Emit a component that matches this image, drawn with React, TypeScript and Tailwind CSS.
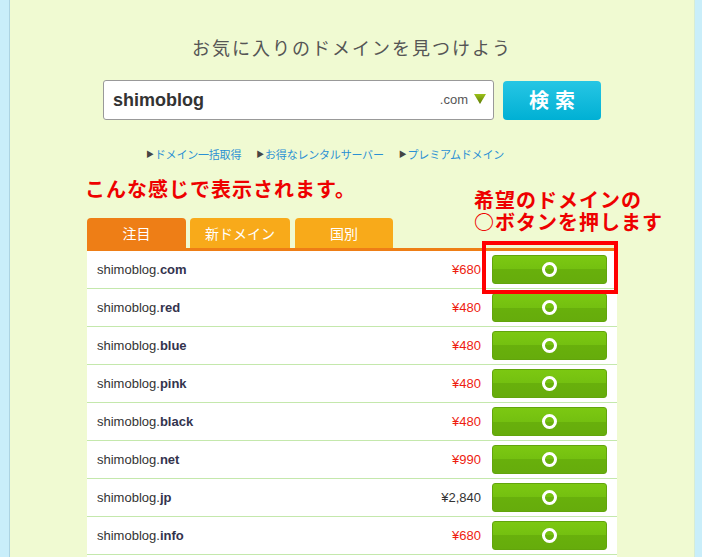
import React from 'react';

const JP = { fontFamily: '"Noto Sans CJK JP", "Liberation Sans", sans-serif' };
const SANS = { fontFamily: '"Liberation Sans", "Noto Sans CJK JP", sans-serif' };

type Row = { tld: string; price: string; sale: boolean };

const rows: Row[] = [
  { tld: 'com', price: '¥680', sale: true },
  { tld: 'red', price: '¥480', sale: true },
  { tld: 'blue', price: '¥480', sale: true },
  { tld: 'pink', price: '¥480', sale: true },
  { tld: 'black', price: '¥480', sale: true },
  { tld: 'net', price: '¥990', sale: true },
  { tld: 'jp', price: '¥2,840', sale: false },
  { tld: 'info', price: '¥680', sale: true },
];

function CircleButton() {
  return (
    <button className="relative flex h-[29px] w-[115px] items-center justify-center overflow-hidden rounded-[3px] border border-[#62a50c] bg-[linear-gradient(#7cc812_0%,#74c010_50%,#68b00c_50%,#66ac0c_100%)]">
      <span className="block h-[15px] w-[15px] rounded-full border-[3px] border-white" />
    </button>
  );
}

function DomainRow({ row }: { row: Row }) {
  return (
    <div className="flex h-[38px] items-center border-b border-[#c4e8ac] bg-white pl-[10px] pr-[10px]" style={SANS}>
      <span className="flex-1 text-[13px] text-[#333]">
        shimoblog.<b className="text-[#33334d]">{row.tld}</b>
      </span>
      <span className={`mr-[11px] text-[13px] ${row.sale ? 'text-[#ee1c10]' : 'text-[#333]'}`}>{row.price}</span>
      <CircleButton />
    </div>
  );
}

export default function App() {
  return (
    <div className="flex h-[557px] w-[702px] overflow-hidden bg-[#f0fad2]">
      <div className="w-[10px] shrink-0 border-r border-[#acd3e2] bg-[#c9eefa]" />
      <div className="flex flex-1 flex-col items-center">
        <h1 className="pt-[36px] text-[18px] leading-[22px] tracking-[2px] text-[#555]" style={JP}>
          お気に入りのドメインを見つけよう
        </h1>

        <div className="mt-[22px] flex items-center gap-[9px]">
          <div className="flex h-[40px] w-[391px] items-center rounded-[3px] border border-[#999] bg-white pl-[9px] pr-[7px]">
            <span className="flex-1 text-[18px] font-bold text-[#333]" style={SANS}>shimoblog</span>
            <span className="text-[13px] text-[#555]" style={SANS}>.com</span>
            <svg width="12" height="10" viewBox="0 0 12 10" className="ml-[6px] mb-[3px]">
              <defs>
                <linearGradient id="tri" x1="0" y1="0" x2="0" y2="1">
                  <stop offset="0" stopColor="#9cc21a" />
                  <stop offset="1" stopColor="#5c7a06" />
                </linearGradient>
              </defs>
              <polygon points="0,0 12,0 6,10" fill="url(#tri)" />
            </svg>
          </div>
          <button
            className="flex h-[39px] w-[98px] items-center justify-center rounded-[4px] bg-[linear-gradient(#27c6e4,#00b0d4)] text-[20px] font-bold tracking-[6px] text-white"
            style={JP}
          >
            <span className="pl-[6px]">検索</span>
          </button>
        </div>

        <div className="mt-[26px] mr-[54px] flex gap-[15px] text-[11px] leading-[16px] tracking-[-0.2px] text-[#2b90d4]" style={JP}>
          {['ドメイン一括取得', 'お得なレンタルサーバー', 'プレミアムドメイン'].map((t) => (
            <span key={t} className="flex items-center">
              <span className="mr-[1px] text-[8px] text-[#444]">▶</span>
              {t}
            </span>
          ))}
        </div>

        <div className="mt-[15px] w-[534px] text-[20px] font-bold leading-[24px] tracking-[1px] text-[#ee0000]" style={JP}>
          こんな感じで表示されます。
        </div>

        <div className="relative mt-[17px] w-[530px]">
          <div className="flex gap-[4px] text-[14px] text-white" style={JP}>
            <div className="flex h-[30px] w-[99px] items-center justify-center rounded-t-[4px] bg-[#ee7e16]">注目</div>
            <div className="flex h-[30px] w-[100px] items-center justify-center rounded-t-[4px] bg-[#f8aa1a]">新ドメイン</div>
            <div className="ml-[1px] flex h-[30px] w-[98px] items-center justify-center rounded-t-[4px] bg-[#f8aa1a]">国別</div>
          </div>
          <div className="h-[3px] bg-[#ee7e16]" />
          {rows.map((r) => (
            <DomainRow key={r.tld} row={r} />
          ))}
          <div className="h-[20px] bg-white" />

          <div
            className="absolute left-[387px] top-[-29px] whitespace-nowrap text-[20px] font-bold leading-[22px] tracking-[1px] text-[#ee0000]"
            style={JP}
          >
            <div>希望のドメインの</div>
            <div>○ボタンを押します</div>
          </div>
          <div className="absolute left-[395px] top-[23px] h-[53px] w-[136px] border-[4px] border-[#ff0000]" />
        </div>
      </div>
      <div className="w-[8px] shrink-0 border-l border-[#d6ecd6] bg-[#c9eefa]" />
    </div>
  );
}
